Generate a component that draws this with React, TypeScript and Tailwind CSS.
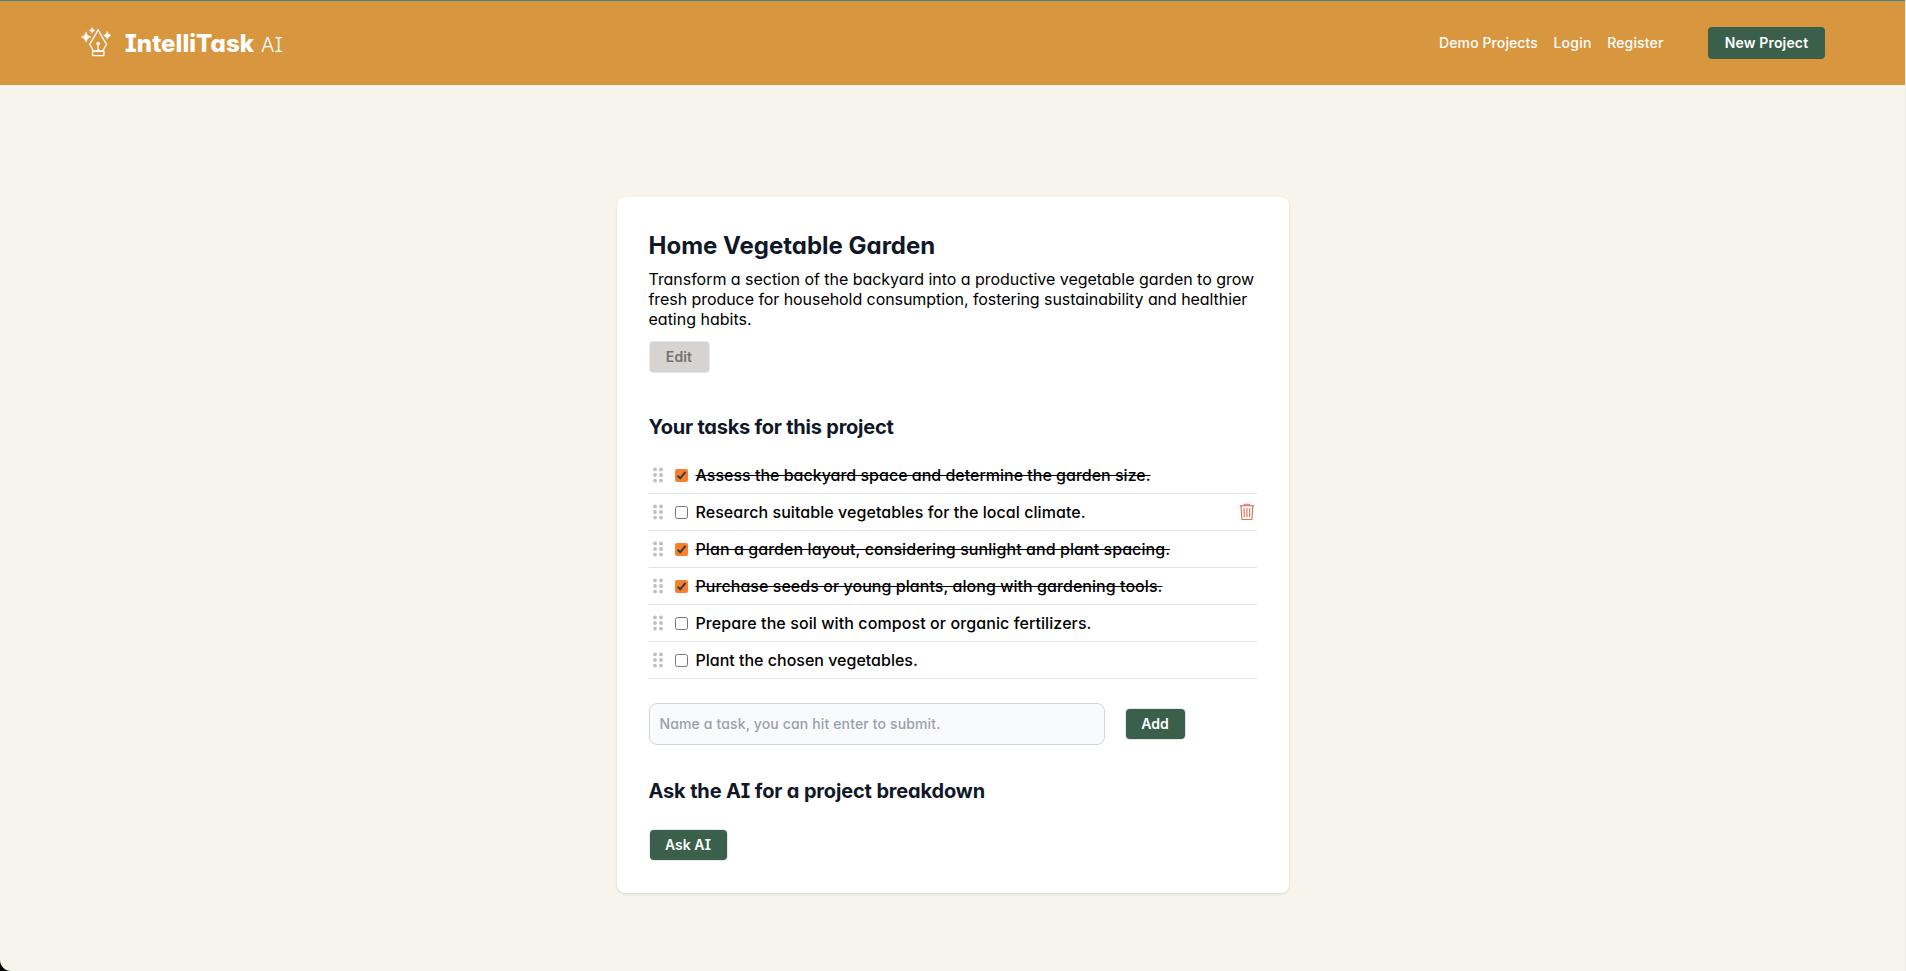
type Task = { text: string; done: boolean; spacing: string; hovered?: boolean };

const tasks: Task[] = [
  { text: "Assess the backyard space and determine the garden size.", done: true, spacing: "tracking-[0px]" },
  { text: "Research suitable vegetables for the local climate.", done: false, spacing: "tracking-[0.06px]", hovered: true },
  { text: "Plan a garden layout, considering sunlight and plant spacing.", done: true, spacing: "tracking-[0.07px]" },
  { text: "Purchase seeds or young plants, along with gardening tools.", done: true, spacing: "tracking-[0.05px]" },
  { text: "Prepare the soil with compost or organic fertilizers.", done: false, spacing: "tracking-[0.09px]" },
  { text: "Plant the chosen vegetables.", done: false, spacing: "tracking-[0px]" },
];

function LogoIcon() {
  return (
    <svg width="32" height="32" viewBox="0 0 32 32" fill="none" stroke="white" strokeWidth="1.3" strokeLinejoin="round" strokeLinecap="round">
      <path d="M18.1 4.6C16.4 8.8 12.6 14 9.6 19.4C11.3 21.4 12.5 23.6 13 26H23.2C23.7 23.6 24.9 21.4 26.6 19.4C23.6 14 19.8 8.8 18.1 4.6Z" />
      <path d="M12.6 26H23.9V30.6H12.6Z" />
      <path d="M18.1 19V26" />
      <circle cx="18.1" cy="18.6" r="1.4" fill="white" stroke="white" strokeWidth="0.9" />
      <g fill="white" stroke="white" strokeWidth="0.5">
        <path d="M6 7.2Q6.8 11.2 11 12Q6.8 12.8 6 17.2Q5.2 12.8 1.2 12Q5.2 11.2 6 7.2Z" />
        <path d="M12.2 2.7Q12.7 4.9 14.9 5.4Q12.7 5.9 12.2 8.1Q11.7 5.9 9.5 5.4Q11.7 4.9 12.2 2.7Z" />
        <path d="M27.3 6.8Q28 9.9 31 10.5Q28 11.1 27.3 14.2Q26.6 11.1 23.7 10.5Q26.6 9.9 27.3 6.8Z" />
      </g>
    </svg>
  );
}

function Grip() {
  return (
    <svg width="12" height="16" viewBox="0 0 12 16" fill="#bfbfbf">
      <circle cx="3" cy="2.4" r="1.9" />
      <circle cx="9" cy="2.4" r="1.9" />
      <circle cx="3" cy="8" r="1.9" />
      <circle cx="9" cy="8" r="1.9" />
      <circle cx="3" cy="13.6" r="1.9" />
      <circle cx="9" cy="13.6" r="1.9" />
    </svg>
  );
}

function Check({ on }: { on: boolean }) {
  if (!on) return <span className="size-[13px] rounded-[2.5px] border border-[#767676] bg-white" />;
  return (
    <span className="size-[13px] rounded-[2px] bg-[#f77f2e]">
      <svg width="13" height="13" viewBox="0 0 13 13" fill="none" stroke="#3b3b3b" strokeWidth="2">
        <path d="M2.6 6.7L5.2 9.3L10.5 2.9" />
      </svg>
    </span>
  );
}

function Trash() {
  return (
    <svg width="16" height="18" viewBox="0 0 16 18" fill="none" stroke="#e2705a" strokeWidth="1.15">
      <path d="M0.6 2.7H15.2" />
      <path d="M5 2.4L5.5 1.2H10.3L10.8 2.4" />
      <path d="M2 2.9L2.9 16.5H12.9L13.8 2.9" />
      <path d="M5 5.2L5.3 14M7.9 5.2V14M10.8 5.2L10.5 14" />
    </svg>
  );
}

const smallButton =
  "flex h-8 items-center justify-center rounded border border-gray-200 bg-[#3a5f4b] bg-clip-padding text-sm font-semibold text-white";

export default function App() {
  return (
    <div className="h-[971px] overflow-hidden bg-black font-['Inter','Liberation_Sans',sans-serif] [font-feature-settings:'cv11','cv08']">
      <div className="flex h-full flex-col overflow-hidden rounded-bl-[11px] border-r border-[#ebe9e4] bg-[#f7f4ec]">
        <header className="flex h-[85px] shrink-0 items-center justify-between border-t border-[#3f8487] bg-[#d8963f] px-20 text-white">
          <div className="flex items-center">
            <div className="-mt-[5px]">
              <LogoIcon />
            </div>
            <div className="mt-px ml-[13px] flex items-baseline">
              <span className="text-2xl font-extrabold tracking-[0.05px]">IntelliTask</span>
              <span className="ml-[7px] text-xl font-light">AI</span>
            </div>
          </div>
          <nav className="flex items-center gap-[15.5px] text-sm font-medium">
            <a className="tracking-[0.1px]">Demo Projects</a>
            <a className="tracking-[0.25px]">Login</a>
            <a className="tracking-[0.15px]">Register</a>
            <button className="ml-[29px] h-8 w-[117px] rounded bg-[#3a5f4b] font-semibold tracking-[0.15px]">New Project</button>
          </nav>
        </header>

        <main className="mx-auto mt-28 w-[672px] rounded-lg bg-white p-8 shadow-sm">
          <h1 className="h-8 pt-px text-2xl leading-8 font-bold text-gray-900">Home Vegetable Garden</h1>
          <p className="mt-2 text-base leading-5 font-normal text-black">
            <span className="tracking-[-0.035px]">Transform a section of the backyard into a productive vegetable garden to grow</span>
            <br />
            <span className="tracking-[-0.065px]">fresh produce for household consumption, fostering sustainability and healthier</span>
            <br />
            eating habits.
          </p>
          <button className="mt-3 flex h-8 w-[61px] items-center justify-center rounded border border-gray-200 bg-[#d6d3d1] text-sm font-semibold tracking-[0.15px] text-[#78716c]">
            Edit
          </button>

          <h2 className="mt-10 text-xl leading-7 font-bold tracking-[-0.23px] text-gray-900">Your tasks for this project</h2>
          <ul className="mt-4">
            {tasks.map((t) => (
              <li key={t.text} className="flex h-[37px] items-center border-b border-[#e3e3e5] pl-[3px]">
                <Grip />
                <span className="ml-[11px] flex pt-px">
                  <Check on={t.done} />
                </span>
                <span className={`ml-2 text-base font-medium text-black ${t.spacing} ${t.done ? "line-through" : ""}`}>
                  {t.text}
                </span>
                {t.hovered && (
                  <span className="mr-0.5 ml-auto">
                    <Trash />
                  </span>
                )}
              </li>
            ))}
          </ul>

          <form className="mt-6 flex items-center gap-5">
            <input
              className="h-[42px] w-[456px] rounded-lg border border-gray-300 bg-gray-50 px-2.5 pb-0.5 text-sm font-medium tracking-[0.14px] placeholder:text-gray-400"
              placeholder="Name a task, you can hit enter to submit."
            />
            <button type="button" className={`${smallButton} w-[61px]`}>Add</button>
          </form>

          <h2 className="mt-8 text-xl leading-7 font-bold tracking-[-0.15px] text-gray-900">Ask the AI for a project breakdown</h2>
          <button className={`${smallButton} mt-6 w-[79px]`}>Ask AI</button>
        </main>
      </div>
    </div>
  );
}
